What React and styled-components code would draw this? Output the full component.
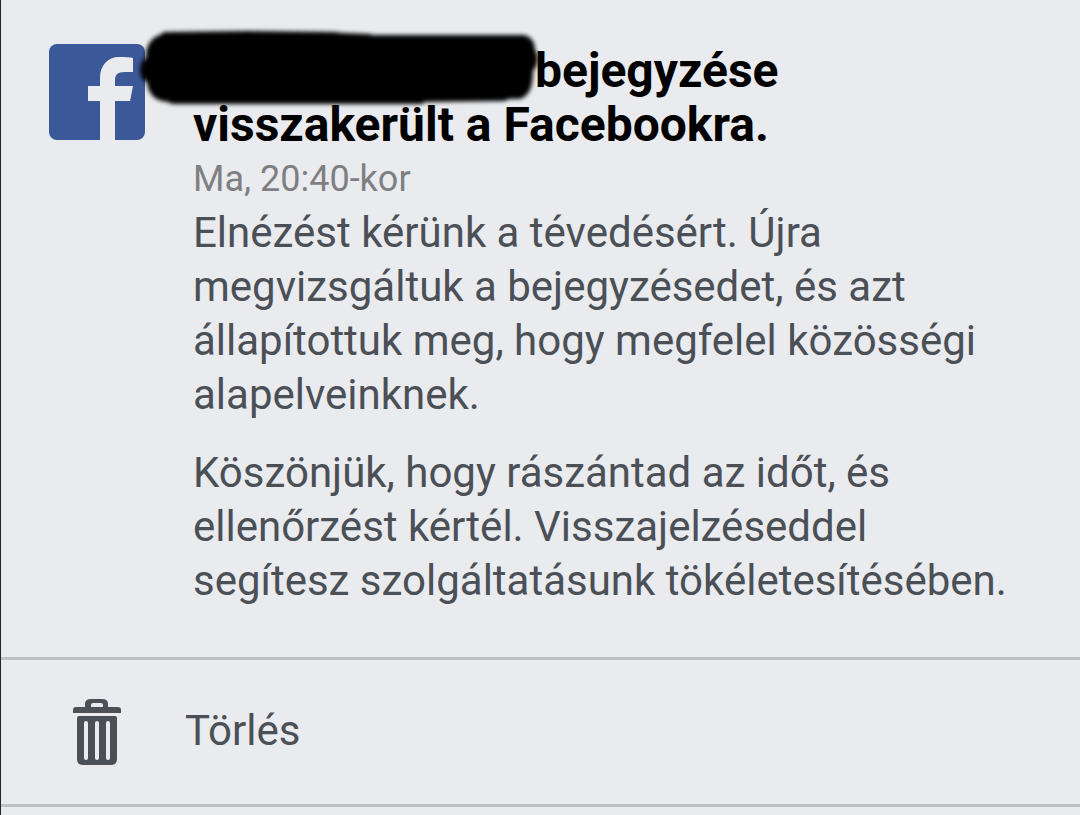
import React from "react";
import styled, { createGlobalStyle } from "styled-components";

const GlobalStyle = createGlobalStyle`
  * { box-sizing: border-box; }
  body {
    margin: 0;
    background: #e9ebee;
    font-family: Roboto, "Liberation Sans", sans-serif;
    color: #4b4f56;
  }
`;

const Page = styled.main`
  min-height: 100vh;
  border-left: 1px solid #24252b;
  background: #e9ebee;
`;

const Notice = styled.article`
  display: flex;
  align-items: flex-start;
  gap: 48px;
  padding: 44px 48px 49px;
`;

const Logo = styled.svg`
  flex: none;
  width: 96px;
  height: 96px;
`;

const Content = styled.div`
  flex: 1;
  min-width: 0;
`;

const Title = styled.h1`
  margin: 0;
  font-size: 48px;
  line-height: 54px;
  font-weight: 700;
  color: #000;
`;

const HiddenName = styled.span`
  position: relative;
  display: inline-block;
  width: 342px;
  height: 32px;
`;

const Scribble = styled.svg`
  position: absolute;
  left: -63px;
  bottom: -28px;
  width: 420px;
  height: 90px;
  pointer-events: none;
`;

const Time = styled.time`
  display: block;
  font-size: 36px;
  line-height: 54px;
  color: #7f7f82;
`;

const Paragraph = styled.p`
  margin: 0;
  font-size: 42px;
  line-height: 54px;

  & + & {
    margin-top: 24px;
  }
`;

const Actions = styled.div`
  border-top: 3px solid #bec0c5;
  border-bottom: 3px solid #bec0c5;
`;

const DeleteButton = styled.button`
  display: flex;
  align-items: flex-start;
  gap: 64px;
  width: 100%;
  padding: 38px 72px;
  border: 0;
  background: transparent;
  font: inherit;
  font-size: 42px;
  line-height: 66px;
  color: inherit;
  text-align: left;
  cursor: pointer;
`;

const TrashIcon = styled.svg`
  flex: none;
  width: 48px;
  height: 68px;
`;

export default function App() {
  return (
    <>
      <GlobalStyle />
      <Page>
        <Notice>
          <Logo viewBox="0 0 96 96" role="img" aria-label="Facebook">
            <rect width="96" height="96" rx="8" fill="#3b5998" />
            <path
              fill="#e9ebee"
              d="M51 97V57H39V42H51V34C51 21 59 13 70 13C76 13 81 13 84 14V28H76C68 28 66 31 66 37V42H84L81 57H66V97Z"
            />
          </Logo>
          <Content>
            <Title>
              <HiddenName>
                <Scribble viewBox="0 0 420 90" aria-hidden="true">
                  <defs>
                    <filter id="soft" x="-5%" y="-10%" width="110%" height="120%">
                      <feGaussianBlur stdDeviation="2" />
                    </filter>
                  </defs>
                  <path
                    filter="url(#soft)"
                    d="M34 7L118 6L205 7L212 8L240 9L242 10H393C401 11 405 17 405 25C409 30 409 40 403 46C403 60 400 71 390 74H379L375 76L295 77L292 79H42L38 77C25 76 18 69 17 57C8 55 8 36 16 33C15 21 22 12 30 10Z"
                  />
                </Scribble>
              </HiddenName>
              bejegyzése visszakerült a&nbsp;Facebookra.
            </Title>
            <Time>Ma, 20:40-kor</Time>
            <Paragraph>
              Elnézést kérünk a tévedésért. Újra megvizsgáltuk a bejegyzésedet,
              és azt állapítottuk meg, hogy megfelel közösségi alapelveinknek.
            </Paragraph>
            <Paragraph>
              Köszönjük, hogy rászántad az időt, és ellenőrzést kértél.
              Visszajelzéseddel segítesz szolgáltatásunk tökéletesítésében.
            </Paragraph>
          </Content>
        </Notice>
        <Actions>
          <DeleteButton type="button">
            <TrashIcon viewBox="0 0 48 68" aria-hidden="true" fill="#4b4f56">
              <path
                fillRule="evenodd"
                d="M0 15V12Q0 9 3 9H12V6Q12 1 18 1H29Q35 1 35 6V9H45Q48 9 48 12V15ZM18 9H30V7Q30 5 28 5H20Q18 5 18 7Z"
              />
              <path
                fillRule="evenodd"
                d="M4 20Q4 18 6 18H42Q44 18 44 20V61Q44 67 38 67H10Q4 67 4 61ZM11 25V60Q11 62 13 62T15 60V25Q15 23 13 23T11 25ZM22 25V60Q22 62 24 62T26 60V25Q26 23 24 23T22 25ZM33 25V60Q33 62 35 62T37 60V25Q37 23 35 23T33 25Z"
              />
            </TrashIcon>
            Törlés
          </DeleteButton>
        </Actions>
      </Page>
    </>
  );
}
